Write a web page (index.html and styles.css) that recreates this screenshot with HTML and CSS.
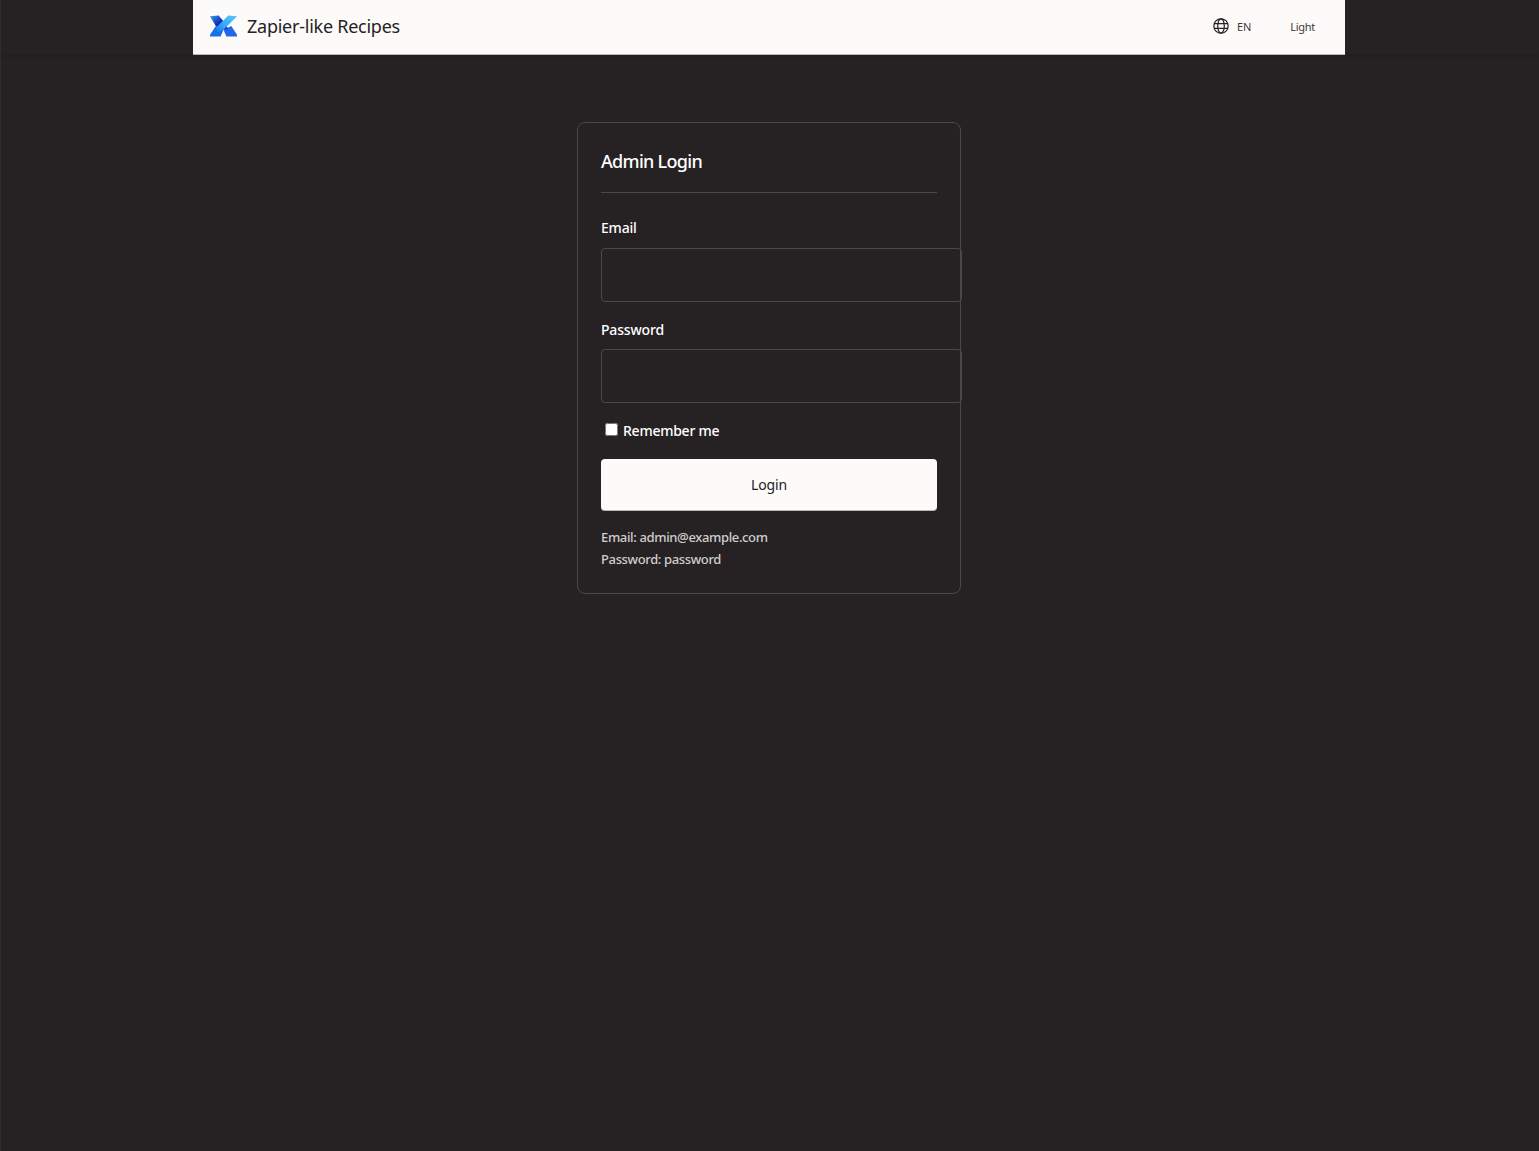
FILE: index.html
```html
<!DOCTYPE html>
<html lang="en">
<head>
<meta charset="utf-8">
<title>Admin Login</title>
<link rel="stylesheet" href="styles.css">
</head>
<body>
<header class="topbar">
  <div class="topbar-inner">
    <a class="brand" href="#">
      <svg class="logo" viewBox="0 0 28 22" width="27" height="22" aria-hidden="true">
        <defs>
          <linearGradient id="lg1" x1="0" y1="0" x2="1" y2="1"><stop offset="0" stop-color="#3f9ff5"/><stop offset="0.5" stop-color="#0c2fb0"/><stop offset="1" stop-color="#0d3fc8"/></linearGradient>
          <linearGradient id="lg2" x1="1" y1="0" x2="0" y2="1"><stop offset="0" stop-color="#5cc8fb"/><stop offset="0.6" stop-color="#35a8f6"/><stop offset="1" stop-color="#1472ea"/></linearGradient>
        </defs>
        <polygon points="0,22 0,20 6,11 14,15 11,22" fill="#1a70ec"/>
        <polygon points="28,22 28,20 22,11 14,15 17,22" fill="#2068e8"/>
        <polygon points="0,1 9,0 14,6 19,14 14,15 6,11" fill="url(#lg1)"/>
        <polygon points="19,0 28,1 14,15 8,18 6,13" fill="url(#lg2)"/>
      </svg>
      <span class="brand-name">Zapier-like Recipes</span>
    </a>
    <nav class="actions">
      <button class="action lang" type="button">
        <svg class="globe" viewBox="0 0 16 16" width="16" height="16" fill="none" stroke="currentColor" stroke-width="1.2" aria-hidden="true">
          <circle cx="8" cy="8" r="7.2"/><ellipse cx="8" cy="8" rx="3.3" ry="7.2"/><path d="M1 5.6h14M1 10.4h14"/>
        </svg>
        <span>EN</span>
      </button>
      <button class="action theme" type="button">Light</button>
    </nav>
  </div>
</header>
<main class="page">
  <section class="card">
    <h1 class="card-title">Admin Login</h1>
    <form class="form">
      <label class="field-label" for="email">Email</label>
      <input class="input" id="email" type="email">
      <label class="field-label second" for="password">Password</label>
      <input class="input" id="password" type="password">
      <label class="remember"><input class="check" type="checkbox"><span>Remember me</span></label>
      <button class="submit" type="button">Login</button>
    </form>
    <div class="hint">
      <p>Email: admin@example.com</p>
      <p>Password: password</p>
    </div>
  </section>
</main>
</body>
</html>
```
FILE: styles.css
```css
* { box-sizing: border-box; }
html, body { height: 100%; }
body {
  margin: 0;
  background: #262224;
  color: #fff;
  font-family: "Noto Sans", "Liberation Sans", sans-serif;
  overflow: hidden;
  border-left: 1px solid #302c2e;
}
.topbar {
  height: 55px;
  box-shadow: 0 1px 3px rgba(0,0,0,.18);
}
.topbar-inner {
  width: 1152px;
  height: 55px;
  margin-left: 192px;
  background: #fcfbf9;
  border-bottom: 1px solid #b9b7b6;
  display: flex;
  align-items: center;
  justify-content: space-between;
  padding: 0 16px 0 17px;
}
.brand { display: flex; align-items: center; gap: 10px; text-decoration: none; color: #262224; }
.logo { display: block; margin-top: -3px; }
.brand-name { font-size: 18px; letter-spacing: -0.25px; margin-top: -3px; }
.actions { display: flex; align-items: center; height: 40px; }
.action {
  border: 0;
  background: none;
  color: #3c383a;
  font: inherit;
  font-size: 11px;
  padding: 0;
  display: flex;
  align-items: center;
}
.action span, .theme { margin-top: -1px; }
.lang { gap: 8px; margin-left: 1px; margin-right: 39px; }
.globe { color: #262224; margin-top: -2px; }
.theme { margin-right: 14px; letter-spacing: -0.3px; }
.page { display: flex; justify-content: center; padding-top: 67px; margin-left: -2px; }
.card {
  width: 384px;
  height: 472px;
  border: 1px solid #4c484a;
  border-radius: 8px;
  padding: 23px;
}
.card-title {
  margin: 0;
  font-size: 18px;
  font-weight: 500;
  line-height: 30px;
  height: 47px;
  border-bottom: 1px solid #4c484a;
  letter-spacing: -0.7px;
}
.form { display: flex; flex-direction: column; align-items: flex-start; }
.field-label { font-size: 14px; font-weight: 500; line-height: 20px; margin-top: 25px; margin-bottom: 10px; letter-spacing: -0.18px; }
.field-label.second { margin-top: 18px; margin-bottom: 9px; }
.input {
  width: 361px;
  height: 54px;
  flex: none;
  background: transparent;
  border: 1px solid #4c484a;
  border-radius: 4px;
  color: #fff;
}
.remember { display: flex; align-items: center; gap: 6px; font-size: 14px; font-weight: 500; line-height: 20px; margin-top: 18px; letter-spacing: -0.25px; }
.check { width: 13px; height: 13px; margin: 0 -1px 3px 4px; }
.submit {
  width: 336px;
  height: 52px;
  margin-top: 18px;
  border: 0;
  border-bottom: 1px solid #b9b7b6;
  border-radius: 4px;
  background: #fcfbf9;
  color: #262224;
  font: inherit;
  font-size: 14px;
  letter-spacing: -0.15px;
}
.hint { margin-top: 15px; color: #cfcdcc; font-size: 13px; font-weight: 500; line-height: 22px; letter-spacing: -0.36px; }
.hint p { margin: 0; }
```
